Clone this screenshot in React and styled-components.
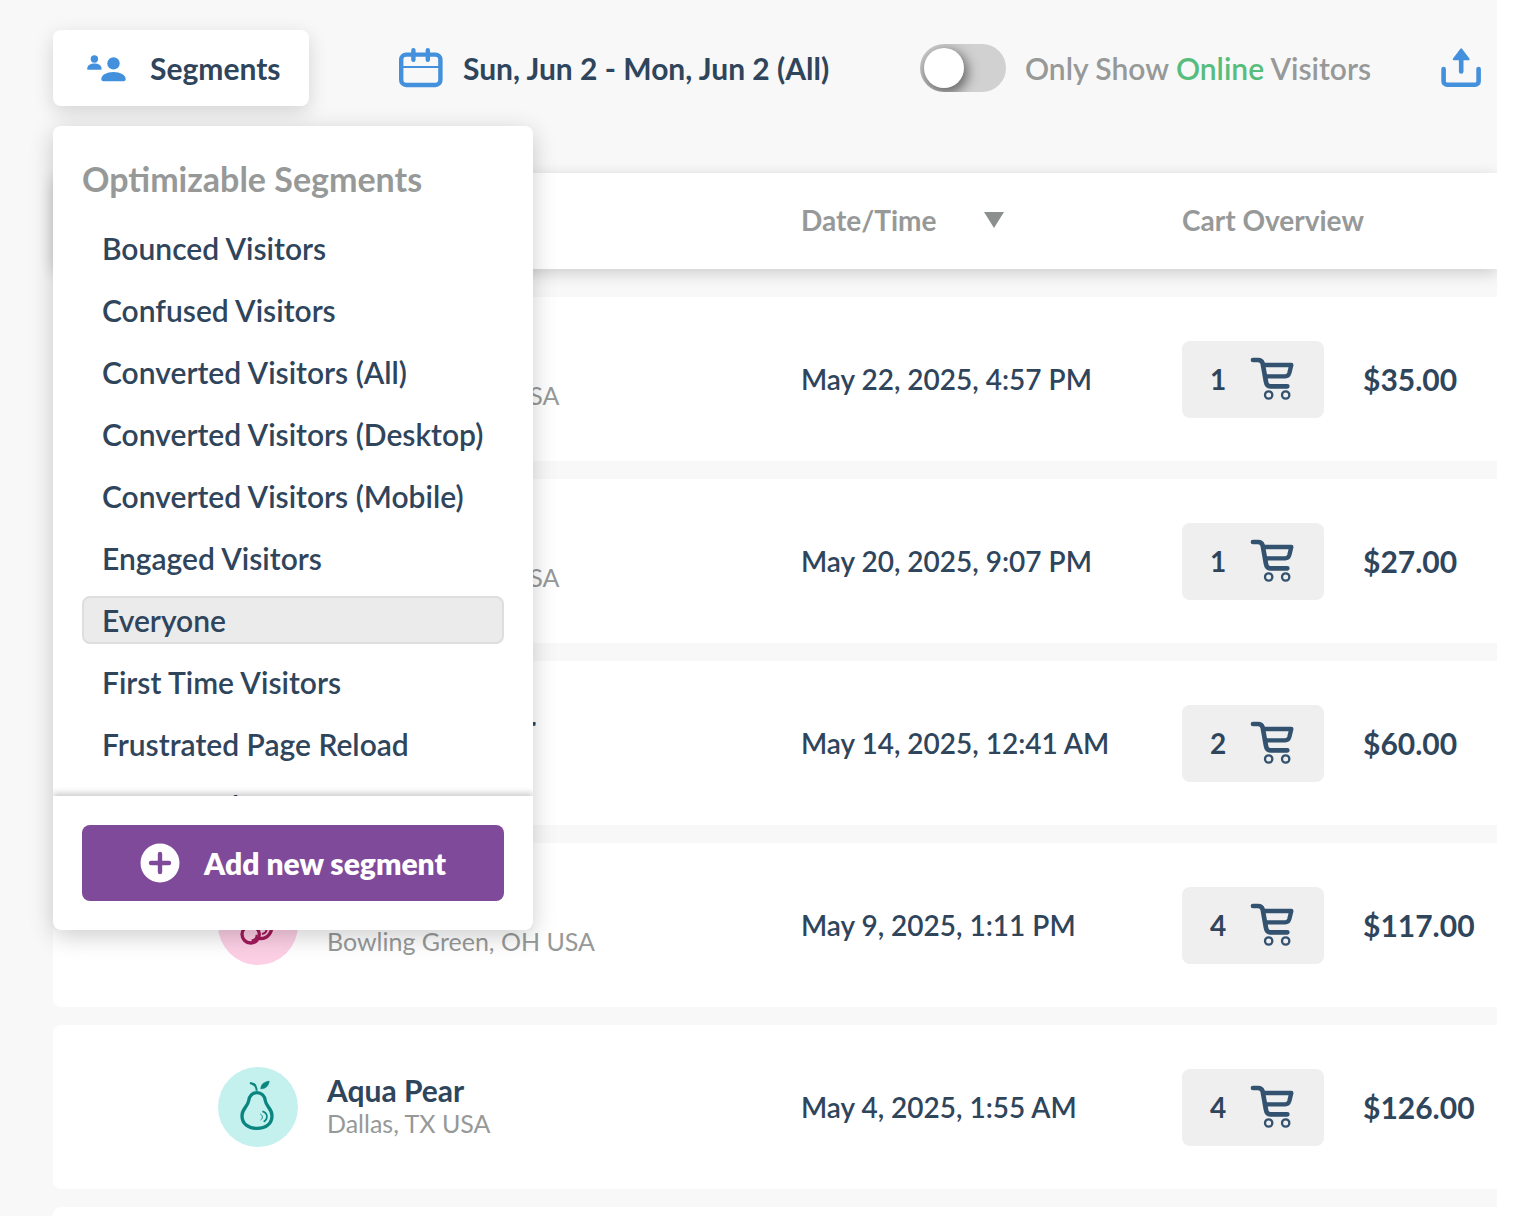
import React, { useState } from 'react';

import styled, { createGlobalStyle } from 'styled-components'

const segments = [
    'Bounced Visitors',
    'Confused Visitors',
    'Converted Visitors (All)',
    'Converted Visitors (Desktop)',
    'Converted Visitors (Mobile)',
    'Engaged Visitors',
    'Everyone',
    'First Time Visitors',
    'Frustrated Page Reload',
    'Frustrated Users',
]

const visitors = [
    { name: 'Ruby Apple', place: 'Jacksonville, NC USA', date: 'May 22, 2025, 4:57 PM', items: 1, total: '$35.00', fruit: 'cherry' },
    { name: 'Teal Plum', place: 'Jacksonville, NC USA', date: 'May 20, 2025, 9:07 PM', items: 1, total: '$27.00', fruit: 'pear' },
    { name: 'Mustard Ginger', place: 'Austin, TX USA', date: 'May 14, 2025, 12:41 AM', items: 2, total: '$60.00', fruit: 'pear' },
    { name: 'Pink Cherry', place: 'Bowling Green, OH USA', date: 'May 9, 2025, 1:11 PM', items: 4, total: '$117.00', fruit: 'cherry' },
    { name: 'Aqua Pear', place: 'Dallas, TX USA', date: 'May 4, 2025, 1:55 AM', items: 4, total: '$126.00', fruit: 'pear' },
]

const PeopleIcon = () => (
    <svg width="40" height="28" viewBox="86 54 40 28" fill="#4390dc" aria-hidden="true">
        <circle cx="94.4" cy="59" r="3.7" />
        <path d="M87.3 69.8v-1.6c0-2.7 3.2-4.6 7.1-4.6s7.1 1.9 7.1 4.6v1.6z" />
        <circle cx="113.5" cy="63.4" r="6.2" />
        <path d="M101.3 79.3c0-4.4 5.4-7.3 12.2-7.3s12.2 2.9 12.2 7.3c0 1.1-.8 1.9-1.9 1.9h-20.6c-1.1 0-1.9-.8-1.9-1.9z" />
    </svg>
)

const CalendarIcon = () => (
    <svg width="44" height="40" viewBox="399 48 44 40" fill="none" stroke="#4390dc" strokeLinecap="round" aria-hidden="true">
        <rect x="401.2" y="54.6" width="39.2" height="30.4" rx="5" strokeWidth="4.4" />
        <path d="M401 67h39" strokeWidth="2" />
        <path d="M413.4 50.2v9.6M427.8 50.2v9.6" strokeWidth="4.4" />
    </svg>
)

const UploadIcon = () => (
    <svg width="40" height="40" viewBox="1441 48 40 40" fill="none" stroke="#4390dc" strokeWidth="4.6" strokeLinecap="round" aria-hidden="true">
        <path d="M1443.6 69v12.2a3.6 3.6 0 0 0 3.6 3.6h27.8a3.6 3.6 0 0 0 3.6-3.6V69" />
        <path d="M1461.2 58v13.4" />
        <path d="M1461.2 49.4l7.4 9.8h-14.8z" fill="#4390dc" strokeWidth="2" strokeLinejoin="round" />
    </svg>
)

const CartIcon = () => (
    <svg width="46" height="46" viewBox="268 108 138 138" fill="none" stroke="#32526f" strokeWidth="14" strokeLinecap="round" strokeLinejoin="round" aria-hidden="true">
        <path d="M277 120h15q11 0 14 10l10 56q2 13 13 13h51" />
        <path d="M308 135h84l-6 24q-3 10-12 10h-56" strokeWidth="13" />
        <circle cx="324" cy="225" r="11" strokeWidth="7" />
        <circle cx="375" cy="225" r="11" strokeWidth="7" />
    </svg>
)

const PlusIcon = () => (
    <svg width="40" height="40" viewBox="0 0 40 40" aria-hidden="true">
        <circle cx="20" cy="20" r="19.5" fill="#fff" />
        <path d="M20 11v18M11 20h18" stroke="#804a9a" strokeWidth="4.4" strokeLinecap="round" />
    </svg>
)

const Pear = () => (
    <svg width="80" height="80" viewBox="53 84 240 240" fill="none" stroke="#0b857f" aria-hidden="true">
        <path d="M170 161c-14 0-23 10-25 24-2 18-20 23-20 45 0 24 18 38 45 38s45-14 45-38c0-22-18-27-20-45-2-14-11-24-25-24z" strokeWidth="10" />
        <path d="M186 217c17 4 18 23 4 31" strokeWidth="5" />
        <path d="M180 225c8 5 8 13 1 18" strokeWidth="3" />
        <path d="M169 155c0-12-7-20-20-23" strokeWidth="6" />
        <path d="M148 132c8-2 17 0 20 8M181 150c0-13 9-22 26-24-1 14-11 24-26 24z" fill="#0b857f" strokeWidth="1" />
    </svg>
)

const Cherry = () => (
    <svg width="80" height="80" viewBox="533 917 240 240" fill="none" stroke="#a3195b" strokeWidth="10" aria-hidden="true">
        <circle cx="631" cy="1065" r="26" />
        <path d="M655 1077c28 4 44-21 37-42-5-14-21-19-34-14" />
        <path d="M625 1041c8-38 30-60 58-72-8 22-8 32-6 50" strokeWidth="6" />
        <path d="M634 1083c11-1 15-8 15-17M665 1064c10-2 14-8 14-16" strokeWidth="6" />
    </svg>
)

export default function App() {
    const [open, setOpen] = useState(true)
    const [current, setCurrent] = useState('Everyone')
    const [online, setOnline] = useState(false)

    return (
        <Page>
            <GlobalStyle />
            <Toolbar>
                <SegmentWrap>
                    <SegmentButton type="button" aria-expanded={open} onClick={() => setOpen(!open)}>
                        <PeopleIcon />
                        Segments
                    </SegmentButton>
                    {open && (
                        <Menu>
                            <MenuBody>
                                <MenuTitle>Optimizable Segments</MenuTitle>
                                <SegmentList>
                                    {segments.map(s => (
                                        <li key={s}>
                                            <SegmentItem type="button" $active={s === current} onClick={() => setCurrent(s)}>{s}</SegmentItem>
                                        </li>
                                    ))}
                                </SegmentList>
                            </MenuBody>
                            <MenuFooter>
                                <AddButton type="button"><PlusIcon />Add new segment</AddButton>
                            </MenuFooter>
                        </Menu>
                    )}
                </SegmentWrap>
                <DateButton type="button">
                    <CalendarIcon />
                    Sun, Jun 2 - Mon, Jun 2 (All)
                </DateButton>
                <OnlineLabel>
                    <Switch type="checkbox" role="switch" checked={online} onChange={e => setOnline(e.target.checked)} />
                    <span>Only Show <Green>Online</Green> Visitors</span>
                </OnlineLabel>
                <button type="button" aria-label="Export"><UploadIcon /></button>
            </Toolbar>

            <Table>
                <Head>
                    <HeadRow>
                        <HeadCell></HeadCell>
                        <HeadCell><SortButton type="button">Date/Time<Arrow /></SortButton></HeadCell>
                        <HeadCell>Cart Overview</HeadCell>
                    </HeadRow>
                </Head>
                <Body>
                    {visitors.map(v => (
                        <Row key={v.date}>
                            <VisitorCell>
                                <Avatar $color={v.fruit === 'pear' ? '#c4f0ed' : '#fccfe5'}>
                                    {v.fruit === 'pear' ? <Pear /> : <Cherry />}
                                </Avatar>
                                <div>
                                    <Name>{v.name}</Name>
                                    <Place>{v.place}</Place>
                                </div>
                            </VisitorCell>
                            <Cell>{v.date}</Cell>
                            <CartCell>
                                <CartButton type="button">{v.items}<CartIcon /></CartButton>
                                <Price>{v.total}</Price>
                            </CartCell>
                        </Row>
                    ))}
                    <Row><Cell /></Row>
                </Body>
            </Table>
        </Page>
    );
}

const GlobalStyle = createGlobalStyle`
* {
    box-sizing: border-box;
}
body {
    margin: 0;
    background: #fff;
    color: #2f455c;
    font-family: Lato, 'Open Sans', sans-serif;
    font-size: 28px;
    font-weight: 600;
    line-height: 34px;
}
button {
    padding: 0;
    border: 0;
    background: none;
    color: inherit;
    font: inherit;
    cursor: pointer;
}
svg {
    display: block;
    flex: none;
}
`;

const Page = styled.main`
height: 100vh;
margin-right: 26px;
padding: 30px 0 0 53px;
background: #f8f8f8;
overflow: hidden;
`;

const Toolbar = styled.div`
display: grid;
grid-template-columns: 346fr 521fr 521fr 40px;
align-items: center;
padding-right: 16px;
margin-bottom: 67px;
font-size: 30px;
`;

const SegmentWrap = styled.div`
position: relative;
z-index: 2;
justify-self: start;
`;

const SegmentButton = styled.button`
display: flex;
align-items: center;
gap: 24px;
height: 76px;
padding: 0 29px 0 33px;
border-radius: 8px;
background: #fff;
box-shadow: 0 6px 20px rgba(0, 0, 0, 0.15);
font-weight: 700;
`;

const Menu = styled.div`
position: absolute;
top: 96px;
left: 0;
width: 480px;
border-radius: 8px;
background: #fff;
box-shadow: 0 6px 24px rgba(0, 0, 0, 0.2);
`;

const MenuBody = styled.div`
height: 670px;
padding: 33px 29px 0;
overflow: hidden;
`;

const MenuTitle = styled.h2`
margin: 0 0 25px;
color: #969998;
font-size: 34px;
font-weight: 700;
line-height: 40px;
`;

const SegmentList = styled.ul`
display: grid;
gap: 14px;
margin: 0;
padding: 0;
list-style: none;
`;

const SegmentItem = styled.button`
width: 100%;
height: 48px;
padding: 0 18px;
border: 2px solid ${props => props.$active ? '#dedede' : 'transparent'};
border-radius: 8px;
background: ${props => props.$active ? '#ebebeb' : 'transparent'};
text-align: left;
white-space: nowrap;
`;

const MenuFooter = styled.div`
padding: 29px;
border-radius: 0 0 8px 8px;
box-shadow: 0 -3px 6px rgba(0, 0, 0, 0.2);
clip-path: inset(-10px 0 0 0);
`;

const AddButton = styled.button`
display: flex;
align-items: center;
justify-content: center;
gap: 24px;
width: 100%;
height: 76px;
border-radius: 8px;
background: #804a9a;
color: #fff;
font-weight: 800;
`;

const DateButton = styled.button`
display: flex;
align-items: center;
gap: 20px;
justify-self: start;
font-weight: 700;
white-space: nowrap;
`;

const OnlineLabel = styled.label`
display: flex;
align-items: center;
gap: 19px;
color: #969998;
white-space: nowrap;
`;

const Switch = styled.input`
appearance: none;
flex: none;
width: 86px;
height: 48px;
margin: 0;
padding: 4px;
border-radius: 24px;
background: ${props => props.checked ? '#57bd7c' : '#d1d1d1'};
overflow: hidden;
cursor: pointer;
&::before {
    content: '';
    display: block;
    width: 40px;
    height: 40px;
    margin-left: ${props => props.checked ? 'auto' : '0'};
    border-radius: 50%;
    background: #fff;
    box-shadow: 2px 4px 12px 2px rgba(0, 0, 0, 0.5);
}
`;

const Green = styled.span`
color: #57bd7c;
`;

const Table = styled.table`
display: block;
`;

const Head = styled.thead`
display: block;
margin-bottom: 28px;
background: #fff;
border-radius: 8px 0 0 8px;
box-shadow: 0 4px 16px rgba(0, 0, 0, 0.18);
`;

const Body = styled.tbody`
display: grid;
gap: 18px;
`;

const HeadRow = styled.tr`
display: grid;
grid-template-columns: 748fr 381fr 315fr;
align-items: center;
height: 96px;
`;

const Row = styled(HeadRow)`
height: 164px;
border-radius: 8px 0 0 8px;
background: #fff;
`;

const HeadCell = styled.th`
padding: 0 0 2px;
color: #969998;
font-weight: 700;
text-align: left;
`;

const SortButton = styled.button`
display: flex;
align-items: center;
gap: 48px;
`;

const Arrow = styled.span`
border: 10px solid transparent;
border-top: 16px solid #8b8f8e;
border-bottom: 0;
`;

const Cell = styled.td`
padding: 0;
white-space: nowrap;
`;

const VisitorCell = styled(Cell)`
display: flex;
align-items: center;
gap: 29px;
padding-left: 165px;
line-height: 33px;
`;

const Avatar = styled.div`
width: 80px;
height: 80px;
border-radius: 50%;
background: ${props => props.$color};
`;

const Name = styled.div`
font-size: 30px;
font-weight: 700;
`;

const Place = styled.div`
color: #969998;
font-size: 25px;
font-weight: 400;
`;

const CartCell = styled(Cell)`
display: flex;
align-items: center;
gap: 39px;
`;

const CartButton = styled.button`
display: flex;
align-items: center;
justify-content: space-between;
width: 142px;
height: 77px;
padding: 0 28px;
border-radius: 8px;
background: #efefef;
font-weight: 700;
`;

const Price = styled.span`
font-size: 30px;
font-weight: 700;
`;
